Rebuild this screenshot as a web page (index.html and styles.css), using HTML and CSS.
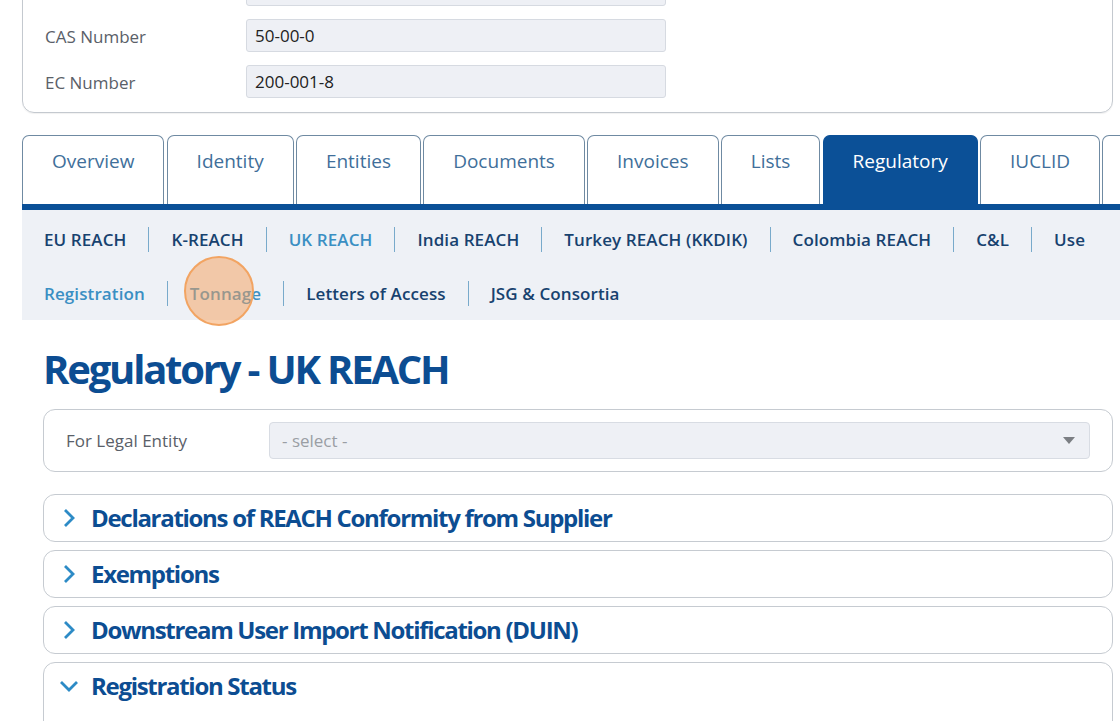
FILE: index.html
```html
<!DOCTYPE html>
<html>
    <head>
        <link rel="stylesheet" href="styles.css">
    </head>
    <body>
        <div class="page">
            <div class="idcard">
                <div class="field"><label></label><div class="input"></div></div>
                <div class="field"><label>CAS Number</label><div class="input">50-00-0</div></div>
                <div class="field"><label>EC Number</label><div class="input">200-001-8</div></div>
            </div>

            <div class="tabs">
                <div class="tab">Overview</div>
                <div class="tab">Identity</div>
                <div class="tab">Entities</div>
                <div class="tab">Documents</div>
                <div class="tab">Invoices</div>
                <div class="tab">Lists</div>
                <div class="tab active">Regulatory</div>
                <div class="tab">IUCLID</div>
                <div class="tab more"></div>
            </div>
            <div class="tabline"></div>

            <div class="subnav">
                <div class="subrow">
                    <a>EU REACH</a>
                    <a>K-REACH</a>
                    <a class="current">UK REACH</a>
                    <a>India REACH</a>
                    <a>Turkey REACH (KKDIK)</a>
                    <a>Colombia REACH</a>
                    <a>C&amp;L</a>
                    <a>Use</a>
                </div>
                <div class="subrow">
                    <a class="current">Registration</a>
                    <a class="current">Tonnage</a>
                    <a>Letters of Access</a>
                    <a>JSG &amp; Consortia</a>
                </div>
                <div class="cursor"></div>
            </div>

            <div class="section">
                <h1>Regulatory - UK REACH</h1>

                <div class="entity">
                    <label>For Legal Entity</label>
                    <div class="select">
                        <span>- select -</span>
                        <span class="caret"></span>
                    </div>
                </div>

                <div class="acc">
                    <svg class="chev" width="12" height="20" viewBox="0 0 12 20"><polyline points="2,2 10,10 2,18"/></svg>
                    <h2>Declarations of REACH Conformity from Supplier</h2>
                </div>
                <div class="acc">
                    <svg class="chev" width="12" height="20" viewBox="0 0 12 20"><polyline points="2,2 10,10 2,18"/></svg>
                    <h2>Exemptions</h2>
                </div>
                <div class="acc">
                    <svg class="chev" width="12" height="20" viewBox="0 0 12 20"><polyline points="2,2 10,10 2,18"/></svg>
                    <h2>Downstream User Import Notification (DUIN)</h2>
                </div>
                <div class="acc open">
                    <svg class="chev down" width="20" height="12" viewBox="0 0 20 12"><polyline points="2,2 10,10 18,2"/></svg>
                    <h2>Registration Status</h2>
                </div>
            </div>
        </div>
    </body>
</html>
```

FILE: styles.css
```css
html, body {
    margin: 0;
    overflow: hidden;
    background: #fff;
}

body {
    font-family: "Open Sans", "Liberation Sans", sans-serif;
    color: #222;
}

.page {
    width: 1091px;
    padding-left: 22px;
}

/* top identity card */
.idcard {
    margin-top: -43px;
    border: 1px solid #c4c9cf;
    border-radius: 12px;
    padding: 15px 22px 14px 22px;
    display: flex;
    flex-direction: column;
    gap: 13px;
    box-shadow: 0 1px 1px rgba(0, 0, 0, 0.06);
}

.field {
    display: flex;
    align-items: center;
}

.field label {
    width: 201px;
    padding-top: 2px;
    font-size: 17px;
    color: #5a6068;
}

.input {
    box-sizing: border-box;
    width: 420px;
    height: 33px;
    padding: 0 8px;
    background: #eef0f5;
    border: 1px solid #d6dae1;
    border-radius: 3px;
    font-size: 17px;
    line-height: 31px;
    color: #222;
}

/* main tabs */
.tabs {
    display: flex;
    gap: 2.2px;
    margin-top: 22px;
    width: 1200px;
}

.tab {
    box-sizing: border-box;
    height: 69px;
    padding: 12px 29px 0 29px;
    border: 1px solid #6f8aa2;
    border-bottom: none;
    border-radius: 7px 7px 0 0;
    font-size: 19px;
    line-height: 26px;
    color: #3f6f9a;
    background: #fff;
    white-space: nowrap;
}

.tab.active {
    background: #0b5097;
    border-color: #0b5097;
    color: #fff;
}

.tab.more {
    width: 120px;
}

.tabline {
    height: 6px;
    width: 1200px;
    background: #0b5097;
}

/* sub navigation */
.subnav {
    position: relative;
    width: 1200px;
    padding-top: 2px;
    background: #eef1f6;
}

.subrow {
    display: flex;
    align-items: center;
    height: 54px;
}

.subrow a {
    padding: 0 22px;
    height: 25px;
    line-height: 25px;
    font-size: 17px;
    font-weight: 600;
    letter-spacing: 0.1px;
    color: #17426f;
    white-space: nowrap;
}

.subrow a + a {
    border-left: 1px solid #78aacb;
}

.subrow a.current {
    color: #3a8fc3;
}

.cursor {
    position: absolute;
    left: 162px;
    top: 46px;
    width: 70px;
    height: 70px;
    box-sizing: border-box;
    border-radius: 50%;
    border: 2px solid #f2a462;
    background: rgba(245, 160, 90, 0.5);
}

/* regulatory section */
.section {
    padding-left: 21px;
}

h1 {
    margin: 25px 0 16px 0;
    font-size: 40px;
    line-height: 48px;
    font-weight: 700;
    letter-spacing: -2.2px;
    color: #0c4d92;
}

.entity {
    display: flex;
    align-items: center;
    padding: 12px 22px;
    border: 1px solid #c6cbd1;
    border-radius: 12px;
}

.entity label {
    width: 203px;
    font-size: 17px;
    color: #5a6068;
}

.select {
    flex: 1;
    display: flex;
    align-items: center;
    justify-content: space-between;
    box-sizing: border-box;
    height: 37px;
    padding: 0 14px 0 12px;
    background: #eef0f5;
    border: 1px solid #d8dce3;
    border-radius: 4px;
    font-size: 17px;
    color: #9a9ea4;
}

.caret {
    width: 0;
    height: 0;
    border-left: 6px solid transparent;
    border-right: 6px solid transparent;
    border-top: 7px solid #7b7e83;
}

.acc {
    display: flex;
    align-items: center;
    box-sizing: border-box;
    height: 48px;
    margin-top: 8px;
    padding-left: 18px;
    border: 1px solid #c6cbd1;
    border-radius: 12px;
}

.entity + .acc {
    margin-top: 22px;
}

.acc.open {
    height: 100px;
    align-items: flex-start;
    padding-top: 8px;
}

.chev {
    fill: none;
    stroke: #2d8bc6;
    stroke-width: 2.8;
    margin-left: 1px;
    margin-right: 16px;
}

.chev.down {
    margin-left: -3px;
    margin-right: 12px;
    margin-top: 9px;
}

.acc h2 {
    margin: 0;
    font-size: 24px;
    line-height: 30px;
    font-weight: 700;
    letter-spacing: -1.3px;
    color: #0c4d92;
}
```
